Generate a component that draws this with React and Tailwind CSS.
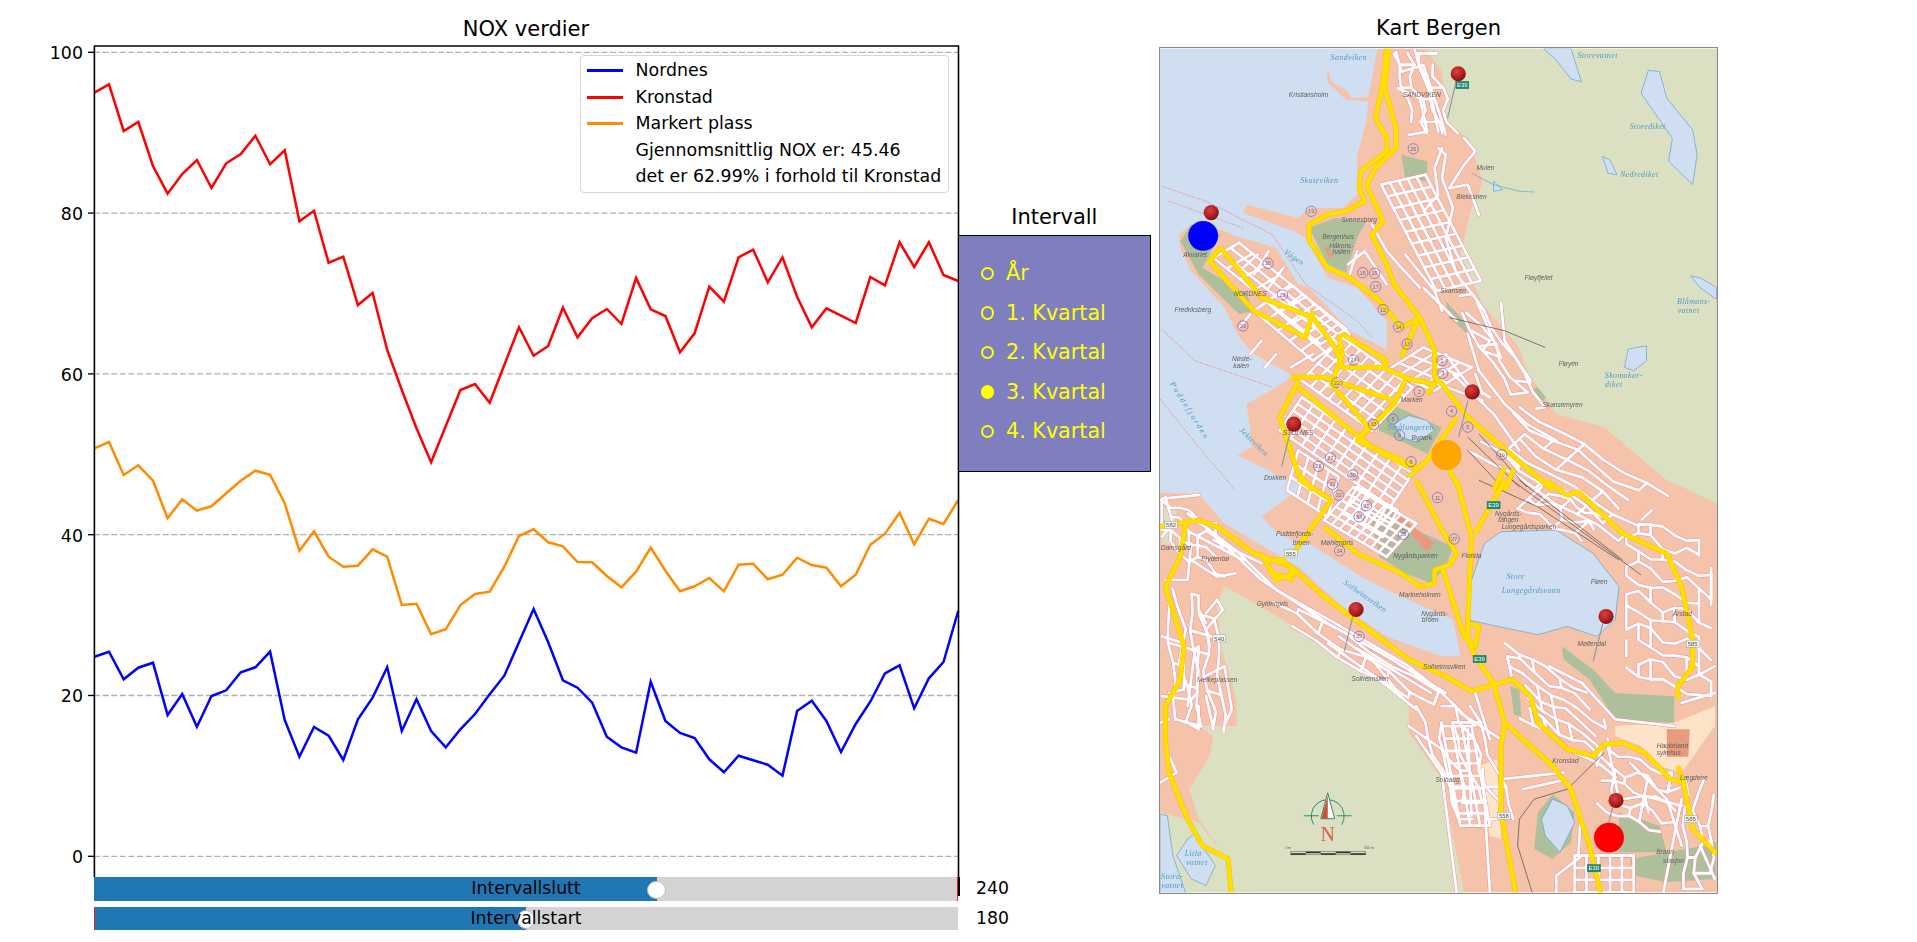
const RED = [278,253,393,366,498,581,522,480,564,490,462,407,493,451,664,632,788,770,915,879,1050,1170,1285,1387,1278,1170,1152,1208,1095,982,1067,1038,923,1012,955,927,972,834,928,948,1057,1000,860,905,772,749,847,772,890,982,925,947,969,831,856,727,801,727,825,843];
const BLUE = [590,575,658,623,608,765,702,800,708,691,637,622,575,780,890,801,827,900,778,713,622,813,718,813,862,808,762,703,647,547,447,547,661,683,728,830,862,878,665,783,819,834,898,937,887,901,914,947,753,722,783,876,792,725,640,616,745,655,606,453];
const ORANGE = [-35,-54,45,16,62,175,118,152,139,100,62,32,44,130,272,214,290,320,317,268,290,435,431,523,508,435,402,395,320,228,208,247,259,306,307,348,382,335,263,332,394,379,354,394,314,311,358,344,293,315,323,379,344,254,221,158,253,176,192,120];

// the plot svg starts at page y 46
const linePts = (vals, toY) => vals.map((v, i) => `${(94.4 + 14.64 * i).toFixed(1)},${(toY(v) - 46).toFixed(1)}`).join(' ');
const TICKS = [100, 80, 60, 40, 20, 0];
const tickY = (t) => 856.3 - 8.04 * t - 46;

const RADIOS = [
  { label: 'År' },
  { label: '1. Kvartal' },
  { label: '2. Kvartal' },
  { label: '3. Kvartal', active: true },
  { label: '4. Kvartal' },
];

// map coordinates: traced from two crops with different scales
const X = (x) => (x - 25) / 2.703;
const Y3 = (y) => y / 3 - 26.67;
const Y4 = (y) => 433.33 + y / 3;
const conv = (s, Y) => s.split(' ').map((p) => { const [x, y] = p.split(',').map(Number); return `${X(x).toFixed(1)},${Y(y).toFixed(1)}`; }).join(' ');
const p3 = (s) => conv(s, Y3);
const p4 = (s) => conv(s, Y4);

const grid = (ox, oy, ux, uy, vx, vy, nu, nv) => {
  const out = [];
  for (let i = 0; i <= nu; i++) { const a = ox + ux * i / nu, b = oy + uy * i / nu; out.push(`${a},${b} ${a + vx},${b + vy}`); }
  for (let j = 0; j <= nv; j++) { const a = ox + vx * j / nv, b = oy + vy * j / nv; out.push(`${a},${b} ${a + ux},${b + uy}`); }
  return out;
};

// hillside streets: wobbly lines along u, stacked along v, with a few links between them
const contours = (seed, ox, oy, ux, uy, vx, vy, n, links = 3) => {
  let s = seed;
  const rnd = () => { s = (s * 16807) % 2147483647; return s / 2147483647; };
  const steps = 7, wob = 0.22 / Math.max(n, 1);
  const at = (i, k, ph) => {
    const t = k / steps, w = Math.sin(k * 1.7 + ph) * wob * (1 + i % 2);
    return [ox + ux * t + vx * (i / n + w), oy + uy * t + vy * (i / n + w)];
  };
  const out = [];
  const phases = [];
  for (let i = 0; i <= n; i++) {
    const ph = rnd() * 6; phases.push(ph);
    const from = rnd() < 0.4 ? 1 : 0, to = rnd() < 0.4 ? steps - 1 : steps;
    const pts = [];
    for (let k = from; k <= to; k++) { const [x, y] = at(i, k, ph); pts.push(`${x.toFixed(0)},${y.toFixed(0)}`); }
    out.push(pts.join(' '));
  }
  for (let i = 0; i < n; i++) {
    for (let l = 0; l < links; l++) {
      const k = Math.floor(rnd() * (steps + 1));
      const [a, b] = at(i, k, phases[i]), [c, d] = at(i + 1, k, phases[i + 1]);
      out.push(`${a.toFixed(0)},${b.toFixed(0)} ${c.toFixed(0)},${d.toFixed(0)}`);
    }
  }
  return out;
};

const WATER3 = [
  '25,80 615,80 600,170 590,225 545,230 530,205 490,180 480,135 478,180 530,235 590,240 585,300 560,400 560,520 520,560 430,560 400,590 260,550 250,575 390,630 420,650 480,770 560,800 640,900 640,985 540,930 430,800 400,790 340,680 220,640 190,625 110,610 75,640 80,680 110,750 200,860 240,950 280,1000 385,1065 340,1100 260,1150 275,1280 235,1305 320,1350 420,1418 25,1418',
  '1065,80 1140,80 1168,180 1140,172 1100,115',
  '1350,145 1380,150 1400,230 1470,325 1482,400 1470,490 1405,420 1415,350 1330,215',
  '1225,405 1245,415 1265,460 1240,455',
  '1465,765 1490,770 1535,800 1535,835 1490,800',
  '1295,985 1345,975 1345,1020 1310,1050 1285,1040',
  '930,480 955,505 930,510',
  '660,1210 700,1185 750,1200 770,1230 720,1265 680,1250',
];
const WATER4 = [
  '25,-5 420,-5 385,40 300,110 340,155 400,190 430,190 570,290 660,340 820,420 840,530 790,530 640,470 520,380 400,260 330,215 200,130 130,40 25,38',
  '905,190 950,155 1100,150 1200,220 1270,320 1260,420 1210,470 1130,440 1050,465 900,430 860,420 870,300',
  '1090,960 1130,980 1150,1030 1110,1120 1070,1070 1060,1020',
  '100,1080 125,1060 145,1110 175,1160 150,1220 110,1200 70,1130',
  '25,1005 45,1010 60,1130 95,1243 25,1243',
];
const HILL3 = ['745,80 1535,80 1535,1445 1400,1380 1230,1220 1100,1180 1020,1050 1000,980 900,850 840,700 870,560 900,490 890,440 860,350 800,300 790,150'];
const HILL4 = [
  '200,320 300,380 400,450 550,560 700,660 700,760 790,900 850,1243 220,1243 200,1130 130,1020 105,930 160,830 170,770 130,740 235,740 230,650 190,500 180,380',
  '25,1000 130,1030 200,1130 220,1243 25,1243',
  '25,80 70,85 60,190 30,195',
  '1420,0 1535,0 1535,70 1480,40',
];
const PARK3 = [
  '430,620 500,590 585,600 560,650 530,755 480,730',
  '680,400 750,420 750,480 690,470',
  '110,610 190,640 140,740 260,820 280,870 240,880 130,760 80,660',
  '610,1190 650,1150 790,1220 750,1300 620,1230',
  '800,840 850,900 860,940 810,890',
  '1030,1110 1050,1100 1072,1130 1060,1148',
];
const PARK4 = [
  '590,90 640,80 720,150 820,200 800,260 760,310 690,280 620,230',
  '1115,500 1200,570 1260,640 1420,650 1420,730 1260,720 1190,600 1120,540',
  '1270,1000 1380,1040 1400,1120 1270,1120',
  '975,620 1000,630 1005,710 985,705',
  '1090,945 1150,1000 1140,1090 1090,1140 1040,1110 1050,1000',
  '1300,1140 1500,1100 1534,1090 1534,1200 1400,1210 1310,1190',
];
const PEACH4 = [
  '1260,740 1420,730 1530,680 1530,740 1440,880 1380,860 1330,800 1260,770',
  '890,860 940,840 950,1080 920,1070',
];

const ROADS3 = [
  '665,90 680,150 740,130 790,300 800,340', '715,80 730,140 760,220 780,330', '670,200 730,230 750,330 700,340',
  '780,380 800,400 790,470 820,560 800,650 830,760 880,830 950,1010', '850,350 880,390 850,430 810,500 860,490 890,580',
  '950,845 960,960 1030,1080', '790,380 770,440 780,520 740,570', '870,930 920,960 900,990 950,1010', '990,1080 1030,1085 1020,1060',
  '860,940 890,1050 960,1150 1020,1210 1100,1260', '800,1000 860,1090 920,1130', '820,1060 930,1180 1000,1290',
  '290,700 250,740', '320,690 280,760', '360,740 320,800', '240,920 270,880', '300,960 270,1000', '340,1000 310,1040', '380,1040 440,1000',
  '535,730 580,690 610,740 640,790', '560,690 540,760', '600,610 640,690 680,740 730,800', '690,700 770,810 790,870', '740,800 830,900',
  '780,1090 900,1140', '880,1060 900,1120', '960,1290 1000,1340',
];
const ROADS4 = [
  '30,55 130,45', '100,100 230,210 340,330 500,430 700,560 790,640 880,740', '140,130 300,300 480,430 640,530 800,640',
  '130,170 250,240', '170,180 300,250', '40,50 60,130 30,170', '110,190 100,300 40,300', '110,240 180,290 230,280',
  '150,400 180,360 195,390 150,450 160,500', '150,430 130,390', '100,680 120,510 130,500 125,640 110,660', '130,600 200,560 220,690 195,750',
  '150,650 170,750', '100,730 130,750 130,680', '30,470 90,490 90,630 50,640', '30,650 100,660', '25,730 50,720', '50,830 70,880 25,910',
  '480,490 620,600 720,690', '510,470 600,540 680,650', '550,500 760,640', '700,740 790,810 830,1000', '720,770 800,900',
  '860,750 870,1010', '790,890 830,1243', '880,640 920,780', '840,700 950,780', '900,870 920,1243', '950,900 1120,880',
  '1080,560 1170,610 1260,720 1420,740', '1240,800 1270,960', '1210,860 1225,800', '1300,850 1400,960 1440,1100', '1340,950 1440,980', '1280,960 1340,950 1350,1000',
  '1150,1130 1300,1130', '1100,1243 1100,1190 1170,1130', '1160,1130 1165,1030', '1440,960 1420,1070 1390,1243', '1490,1100 1530,1200',
  '1440,670 1530,640', '1480,590 1530,560', '1010,930 1110,905',
];
const GRIDS3 = [
  ...grid(625, 490, 120, -30, 150, 320, 5, 9), ...grid(170, 710, 70, -45, 290, 260, 3, 8), ...grid(280, 870, 100, -80, 160, 150, 3, 5),
  ...grid(410, 1130, 300, 230, -60, 100, 10, 5), ...grid(520, 950, 190, 150, -110, 130, 8, 5), ...grid(640, 1050, 130, 60, 100, -70, 4, 3),
  ...grid(400, 1290, 110, 80, -30, 120, 4, 3),
];
const GRIDS4 = [
  ...grid(470, 120, 170, 110, 80, -100, 8, 5), ...grid(1150, 1130, 160, 0, 0, 110, 5, 3), ...grid(790, 740, 80, 0, 50, 300, 3, 8),
  ...grid(560, 20, 110, 70, -40, 80, 4, 2),
];
const CONTOURS3 = [
  ...contours(11, 660, 95, 60, 240, 100, 0, 3, 2),
  ...contours(23, 810, 830, 200, 340, 60, -10, 2, 2),
  ...contours(37, 1000, 1160, 400, 270, -130, 130, 6, 3),
];
const CONTOURS4 = [
  ...contours(53, 30, 60, 170, 90, 0, 130, 3, 3),
  ...contours(67, 40, 320, 30, 400, 130, 40, 4, 3),
  ...contours(71, 340, 340, 440, 300, -20, 60, 2, 4),
  ...contours(83, 720, 680, 120, 340, 150, 0, 4, 3),
  ...contours(97, 960, 490, 260, 180, 40, 220, 6, 3),
  ...contours(101, 1290, 110, 230, 90, 0, 460, 10, 3),
  ...contours(113, 1240, 810, 200, 90, -30, 170, 4, 3),
  ...contours(127, 1450, 900, 0, 330, 70, 0, 2, 3),
  ...contours(131, 1060, 20, 170, 100, -60, 60, 2, 3),
];

const YELLOW3 = [
  '640,80 630,180 610,290 640,350 640,390 570,450 565,500 580,540 530,570 480,580 430,610 430,660 480,740 540,770 620,840 680,920 725,895 680,1010',
  '645,80 635,200 665,320 665,380 610,440 585,490 630,600 600,640 640,730 660,790 730,890 770,990 770,1070 790,1090 860,1190 1090,1410',
  '190,680 160,720 190,760 280,870 420,950 440,870', '190,680 300,830 440,890 500,980 520,1040 640,1040', '520,940 640,1020 630,1040 700,1075 770,1090 750,1120',
  '510,940 520,1000 490,1090 590,1220 560,1260 700,1340', '400,1080 350,1190 400,1360 440,1410', '400,1100 520,1210 600,1280 720,1340',
  '380,1070 470,1070 660,1140', '690,1080 660,1150 570,1250', '700,1370 750,1320 830,1190', '810,1350 840,1410', '960,1340 930,1410', '985,1345 960,1410',
];
const YELLOW4 = [
  '400,-5 490,60 390,215', '470,140 560,220 680,280 730,320 770,310 770,270 810,255 830,220 790,150 720,0',
  '830,0 870,170 860,430 860,480 880,530 930,610 960,730 950,800 950,1000 990,1243', '960,0 880,160', '790,260 850,470 880,500 890,440 860,430',
  '25,140 130,120 180,140 280,220 380,260 470,350 700,540 800,590 870,635 980,600 1030,650 1050,730 1130,810 1200,830 1230,795 1280,790 1340,820 1410,900 1445,910 1470,1050 1535,1125',
  '95,130 80,230 40,320 90,500 80,600 40,680 40,790 50,880 100,1020 140,1100 210,1140 218,1243', '960,730 1090,860 1140,930 1190,1100 1220,1243',
  '310,240 340,300 390,280 360,240 310,240', '300,220 330,280 390,300', '1070,0 1130,45 1160,35 1280,160 1400,220 1440,320 1470,480 1470,560 1430,620 1430,660',
  '1430,860 1445,910',
];
const RAIL = [
  p3('860,1250 1000,1400'), p3('890,1240 1020,1400'), p3('860,1290 960,1410'), p3('810,890 960,930 1070,980'),
  p4('890,0 1050,80 1270,240'), p4('980,0 1140,130 1330,285'), p4('1000,0 1280,240'), p4('1230,820 1130,930 1040,960 1000,1020 995,1100 1035,1243'),
];
const DASHED = [p3('30,495 150,540 330,640 420,790 560,900 600,950'), p3('30,925 120,1020 330,1100'), p3('25,1135 130,1280 230,1410'), p3('50,540 250,620')];

const CIRCLES3 = [[712,382,'26'],[435,570,'19'],[318,727,'20'],[357,822,'23'],[250,915,'29'],[575,755,'16'],[607,757,'15'],[610,797,'17'],[630,866,'12'],[672,918,'14'],[695,970,'13'],[790,1020,'1'],[792,1058,'3'],[550,1018,'24'],[505,1086,'22'],[728,1113,'2'],[816,1172,'4'],[860,1220,'5'],[657,1196,'6'],[675,1245,'9'],[604,1212,'18'],[706,1324,'8'],[952,1303,'10'],[487,1312,'27'],[455,1338,'28'],[548,1364,'30'],[493,1392,'31']];
const CIRCLES4 = [[510,45,'32'],[585,76,'25'],[565,110,'33'],[778,52,'11'],[685,163,'28'],[823,177,'27'],[512,212,'34'],[565,470,'35']];
const SHIELDS = [
  [X(845), Y3(190), 'E39', true], [X(930), Y4(75), 'E39', true], [X(892), Y4(538), 'E39', true], [X(1202), Y4(1168), 'E39', true],
  [X(380), Y4(220), '555'], [X(186), Y4(476), '540'], [X(1470), Y4(492), '585'], [X(1465), Y4(1020), '585'], [X(958), Y4(1010), '558'], [X(55), Y4(135), '582'],
];
const BLUE_LABELS = [
  [X(537), Y3(115), 'Sandviken'], [X(1212), Y3(110), 'Storevatnet'], [X(1348), Y3(322), 'Storediket'], [X(1325), Y3(468), 'Nedrediket'], [X(457), Y3(486), 'Skuteviken'],
  [X(1473), Y3(850), 'Blåmans-'], [X(1459), Y3(877), 'vatnet'], [X(1283), Y3(1072), 'Skomakar-'], [X(1256), Y3(1098), 'diket'], [X(705), Y3(1228), 'Smålungeren'],
  [X(990), Y4(298), 'Store'], [X(1032), Y4(338), 'Lungegårdsvann'], [X(115), Y4(1130), 'Litla'], [X(125), Y4(1157), 'vatnet'], [X(58), Y4(1200), 'Stora-'], [X(58), Y4(1227), 'vatnet'],
];
const ROTATED_BLUE = [[X(385), Y3(715), 'Vågen', 35], [X(100), Y3(1175), 'Puddefjorden', 58, 2], [X(275), Y3(1270), 'Jekteviken', 45], [X(578), Y4(355), 'Solheimsviken', 35]];
const GREY_LABELS = [
  [X(428), Y3(226), 'Kristiansholm'], [X(735), Y3(225), 'SANDVIKEN'], [X(908), Y3(445), 'Mulen'], [X(870), Y3(532), 'Blekksrien'], [X(565), Y3(603), 'Sverresborg'],
  [X(508), Y3(655), 'Bergenhus'], [X(517), Y3(680), 'Håkons-'], [X(517), Y3(698), 'hallen'], [X(120), Y3(707), 'Akvariet'], [X(270), Y3(826), 'NORDNES'],
  [X(114), Y3(873), 'Fredriksberg'], [X(1052), Y3(778), 'Fløyfjellet'], [X(820), Y3(817), 'Skansen'], [X(1133), Y3(1036), 'Fløyen'], [X(1117), Y3(1160), 'Skansemyren'],
  [X(247), Y3(1022), 'Nøste-'], [X(245), Y3(1042), 'kaien'], [X(708), Y3(1145), 'Marken'], [X(400), Y3(1244), 'STOLNES'], [X(337), Y3(1378), 'Dokken'], [X(735), Y3(1258), 'Bypark'],
  [X(970), Y4(108), 'Nygårds-'], [X(970), Y4(127), 'tangen'], [X(1026), Y4(146), 'Lungegårdsparken'], [X(870), Y4(234), 'Florida'], [X(1216), Y4(311), 'Fløen'],
  [X(718), Y4(234), 'Nygårdsparken'], [X(730), Y4(352), 'Marineholmen'], [X(770), Y4(408), 'Nygårds-'], [X(758), Y4(427), 'broen'], [X(1196), Y4(500), 'Møllendal'],
  [X(1442), Y4(410), 'Årstad'], [X(796), Y4(567), 'Solheimsviken'], [X(595), Y4(603), 'Solheimslien'], [X(180), Y4(608), 'Melkeplassen'], [X(175), Y4(243), 'Frydenbø'],
  [X(68), Y4(210), 'Damsgård'], [X(330), Y4(379), 'Gyldenpris'], [X(390), Y4(167), 'Puddefjords-'], [X(408), Y4(195), 'broen'], [X(505), Y4(195), 'Møhlenpris'], [X(1125), Y4(852), 'Kronstad'],
  [X(805), Y4(907), 'Solhaug'], [X(1415), Y4(806), 'Haukeland'], [X(1405), Y4(826), 'sykehus'], [X(1473), Y4(903), 'Lægdene'], [X(1395), Y4(1126), 'Brann'], [X(1418), Y4(1153), 'stasjon'],
];
const PINS = [
  { c: [X(834), Y3(156)], s: [X(826), Y3(190), X(805), Y3(290)] }, { c: [X(164), Y3(574)], s: null },
  { c: [X(872), Y3(1114)], s: [X(860), Y3(1140), X(835), Y3(1250)] }, { c: [X(388), Y3(1211)], s: [X(378), Y3(1235), X(355), Y3(1340)] },
  { c: [X(557), Y4(389)], s: [X(548), Y4(410), X(525), Y4(515)] }, { c: [X(1235), Y4(410)], s: [X(1226), Y4(432), X(1200), Y4(545)] },
  { c: [X(1262), Y4(964)], s: [X(1253), Y4(985), X(1240), Y4(1040)] },
];

const ROAD_PTS = [...ROADS3.map(p3), ...GRIDS3.map(p3), ...CONTOURS3.map(p3), ...ROADS4.map(p4), ...GRIDS4.map(p4), ...CONTOURS4.map(p4)];
const YELLOW_PTS = [...YELLOW3.map(p3), ...YELLOW4.map(p4)];

function BergenMap() {
  const cx = X(480), cy = Y4(1010);
  return (
    <svg width="559" height="847" viewBox="0 0 559 847" className="block border border-[#8a8a8a] box-border">
      <defs>
        <filter id="soft" x="0" y="0" width="100%" height="100%"><feGaussianBlur stdDeviation="0.55" /></filter>
        <radialGradient id="pin" cx="40%" cy="35%" r="70%"><stop offset="0%" stopColor="#d8403f" /><stop offset="60%" stopColor="#b31f20" /><stop offset="100%" stopColor="#6f1012" /></radialGradient>
        <clipPath id="mapClip"><rect width="559" height="847" /></clipPath>
      </defs>
      <g clipPath="url(#mapClip)">
        <g filter="url(#soft)">
          <rect width="559" height="847" fill="#f5c3aa" />
          <polygon points={p3(WATER3[0])} fill="#cfdff1" />
          <polygon points={p4(WATER4[0])} fill="#cfdff1" />
          {HILL3.map((w, i) => <polygon key={i} points={p3(w)} fill="#dce0c3" />)}
          {HILL4.map((w, i) => <polygon key={i} points={p4(w)} fill="#dce0c3" />)}
          {PEACH4.map((w, i) => <polygon key={i} points={p4(w)} fill="#fde3c8" />)}
          {PARK3.map((w, i) => <polygon key={i} points={p3(w)} fill="#aebf9c" />)}
          {PARK4.map((w, i) => <polygon key={i} points={p4(w)} fill="#aebf9c" />)}
          {WATER3.slice(1).map((w, i) => <polygon key={i} points={p3(w)} fill="#cfdff1" stroke="#5ea3c8" strokeWidth="0.7" />)}
          {WATER4.slice(1).map((w, i) => <polygon key={i} points={p4(w)} fill="#cfdff1" stroke="#5ea3c8" strokeWidth="0.7" />)}
          <polygon points={p4('1400,750 1462,750 1458,832 1400,832')} fill="#e79a7c" />
          <polygon points={p3('470,680 480,675 495,705 485,712')} fill="#e89a80" />
          <polygon points={p4('660,110 680,110 770,190 750,215')} fill="#e89a80" />
          <polyline points={p3('870,455 930,490 1000,510 1040,512')} fill="none" stroke="#5ea3c8" strokeWidth="0.7" />
          {DASHED.map((d, i) => <polyline key={i} points={d} fill="none" stroke="#e07a8a" strokeWidth="0.7" strokeDasharray="2 1.2" />)}
          {ROAD_PTS.map((r, i) => <polyline key={i} points={r} fill="none" stroke="#ec8ba0" strokeWidth="3.7" strokeLinejoin="round" strokeLinecap="round" />)}
          {ROAD_PTS.map((r, i) => <polyline key={i} points={r} fill="none" stroke="#ffffff" strokeWidth="2.8" strokeLinejoin="round" strokeLinecap="round" />)}
          {RAIL.map((r, i) => <polyline key={i} points={r} fill="none" stroke="#5a5a5a" strokeWidth="0.8" />)}
          {YELLOW_PTS.map((r, i) => <polyline key={i} points={r} fill="none" stroke="#eec000" strokeWidth="5" strokeLinejoin="round" />)}
          {YELLOW_PTS.map((r, i) => <polyline key={i} points={r} fill="none" stroke="#ffde00" strokeWidth="4.2" strokeLinejoin="round" />)}
          {[...CIRCLES3.map(([x, y, t]) => [X(x), Y3(y), t]), ...CIRCLES4.map(([x, y, t]) => [X(x), Y4(y), t])].map(([x, y, t], i) => (
            <g key={i}>
              <circle cx={x} cy={y} r="5.2" fill="none" stroke="#8878b8" strokeWidth="0.9" />
              <text x={x} y={y + 2} fontSize="5.5" textAnchor="middle" fill="#6c5fa0" fontFamily="Liberation Sans">{t}</text>
            </g>
          ))}
          {SHIELDS.map(([x, y, t, green], i) => (
            <g key={i}>
              <rect x={x - 6.5} y={y - 3.6} width="13" height="7.2" fill={green ? '#1f8a70' : '#f4f4ee'} stroke={green ? '#0f6b55' : '#999'} strokeWidth="0.5" />
              <text x={x} y={y + 2.2} fontSize="6" textAnchor="middle" fill={green ? '#ffffff' : '#555'} fontFamily="Liberation Sans">{t}</text>
            </g>
          ))}
          {BLUE_LABELS.map(([x, y, t], i) => <text key={i} x={x} y={y} fontSize="8" textAnchor="middle" fill="#4f9cc4" fontStyle="italic" letterSpacing="0.4" fontFamily="Liberation Serif">{t}</text>)}
          {ROTATED_BLUE.map(([x, y, t, a, ls]) => <text key={t} x={x} y={y} fontSize="8" textAnchor="middle" fill="#4f9cc4" fontStyle="italic" letterSpacing={ls || 0.4} transform={`rotate(${a} ${x} ${y})`} fontFamily="Liberation Serif">{t}</text>)}
          {GREY_LABELS.map(([x, y, t], i) => <text key={i} x={x} y={y} fontSize="6.6" textAnchor="middle" fill="#5f5f5f" fontStyle="italic" fontFamily="Liberation Sans">{t}</text>)}
          {/* compass */}
          <g stroke="#2c8a78" strokeWidth="1" fill="none">
            <path d={`M ${cx - 14} ${cy + 9} A 16.5 16.5 0 1 1 ${cx + 14} ${cy + 9}`} />
            <path d={`M ${cx - 24} ${cy} H ${cx - 9} M ${cx + 9} ${cy} H ${cx + 24}`} />
            <path d={`M ${cx} ${cy - 23} L ${cx - 7} ${cy + 3} H ${cx + 7} Z`} fill="#ffffff" />
          </g>
          <path d={`M ${cx} ${cy - 20} L ${cx - 6.5} ${cy + 3} H ${cx} Z`} fill="#c9503c" />
          <text x={cx} y={Y4(1085)} fontSize="20" textAnchor="middle" fill="#d9604a" fontFamily="Liberation Serif">N</text>
          <text x={X(373)} y={Y4(1111)} fontSize="3.5" textAnchor="middle" fill="#555" fontFamily="Liberation Sans">0 m</text>
          <text x={X(592)} y={Y4(1111)} fontSize="3.5" textAnchor="middle" fill="#555" fontFamily="Liberation Sans">500 m</text>
          {[0, 1, 2, 3, 4].map((i) => <rect key={i} x={X(380) + i * 15} y={Y4(1118) + (i % 2 ? 0 : 1.6)} width="15" height="1.6" fill="#333" />)}
          <rect x={X(380)} y={Y4(1118)} width="75" height="3.2" fill="none" stroke="#333" strokeWidth="0.4" />
          {PINS.map(({ s }, i) => s && <line key={i} x1={s[0]} y1={s[1]} x2={s[2]} y2={s[3]} stroke="#8f9aa5" strokeWidth="1.2" />)}
          {PINS.map(({ c }, i) => <circle key={i} cx={c[0]} cy={c[1]} r="7.6" fill="url(#pin)" />)}
        </g>
        <circle cx={X(142)} cy={Y3(644)} r="15" fill="#0000ff" />
        <circle cx={X(802)} cy={Y3(1304)} r="15.2" fill="#ffa500" />
        <circle cx={X(1243)} cy={Y4(1076)} r="15" fill="#ff0000" />
      </g>
    </svg>
  );
}

function Slider({ label, value, pct, valueLineLeft, spine, className }) {
  return (
    <div className={`flex ${className}`}>
      <div className="relative ml-[94px] w-[864px] h-full bg-[#d3d3d3]">
        <div className="h-full bg-[#1f77b4]" style={{ width: pct }} />
        <div className={`absolute top-0 h-full w-[1.2px] bg-[#e8202a] ${valueLineLeft ? 'left-0' : 'right-0'}`} />
        <div className="absolute top-1/2 w-[18.6px] h-[18.6px] -mt-[8.5px] -ml-[9.3px] rounded-full bg-white border border-[#bdbdbd]" style={{ left: pct }} />
        <div className="absolute inset-0 flex items-center justify-center text-[17.3px] leading-none text-black">{label}</div>
        {spine && <div className="absolute left-full top-0 h-[19px] w-[1.6px] bg-black" />}
      </div>
      <div className="ml-[18px] flex items-center text-[17.3px] leading-none text-black">{value}</div>
    </div>
  );
}

export default function App() {
  return (
    <div className="flex w-[1917px] h-[942px] overflow-hidden bg-white font-['DejaVu_Sans'] text-black">
      <div className="w-[1150.7px] flex flex-col shrink-0">
        <div className="flex h-[877px]">
          {/* NOX chart */}
          <div className="w-[958px] shrink-0">
            <div className="h-[46px] pl-[94px] flex items-center justify-center text-[21px] leading-none pt-[12px]">NOX verdier</div>
            <div className="relative h-[831px]">
              <svg width="960" height="831" className="block overflow-visible">
                {TICKS.map((t) => (
                  <g key={t}>
                    <line x1="94" x2="958" y1={tickY(t)} y2={tickY(t)} stroke="#b0b0b0" strokeWidth="1.33" strokeDasharray="6 2.6" />
                    <line x1="88" x2="94" y1={tickY(t)} y2={tickY(t)} stroke="#000" strokeWidth="1.33" />
                    <text x="83" y={tickY(t)} dy="6.8" textAnchor="end" fontSize="17.4" fontFamily="DejaVu Sans" fill="#000">{t}</text>
                  </g>
                ))}
                <polyline points={linePts(RED, (v) => v / 3)} fill="none" stroke="#ff0000" strokeWidth="2.5" />
                <polyline points={linePts(ORANGE, (v) => 460 + v / 3)} fill="none" stroke="#ff8c00" strokeWidth="2.5" />
                <polyline points={linePts(BLUE, (v) => 460 + v / 3)} fill="none" stroke="#0000ff" strokeWidth="2.5" />
                <path d="M 94.4 831 V 0 H 958.5 V 831" fill="none" stroke="#000" strokeWidth="1.6" />
              </svg>
              {/* legend */}
              <div className="absolute left-[580px] top-[9px] w-[369px] h-[138px] rounded-[4px] border-[1.67px] border-[#d6d6d6] bg-white/80 text-[17.4px] leading-none flex flex-col pt-[1.5px]">
                <div className="h-[26.6px] flex items-center whitespace-nowrap"><span className="ml-[5.5px] w-[36px] h-[3px] bg-[#0000ff]" /><span className="ml-[13px]">Nordnes</span></div>
                <div className="h-[26.6px] flex items-center whitespace-nowrap"><span className="ml-[5.5px] w-[36px] h-[3px] bg-[#ff0000]" /><span className="ml-[13px]">Kronstad</span></div>
                <div className="h-[26.6px] flex items-center whitespace-nowrap"><span className="ml-[5.5px] w-[36px] h-[3px] bg-[#ff8c00]" /><span className="ml-[13px]">Markert plass</span></div>
                <div className="h-[26.6px] flex items-center whitespace-nowrap pl-[54.5px]">Gjennomsnittlig NOX er: 45.46</div>
                <div className="h-[26.6px] flex items-center whitespace-nowrap pl-[54.5px]">det er 62.99% i forhold til Kronstad</div>
              </div>
            </div>
          </div>

          {/* Intervall radio panel */}
          <div className="w-[192.7px] shrink-0">
            <div className="h-[235px] flex items-end justify-center text-[21px] leading-none pb-[7px]">Intervall</div>
            <div className="h-[237px] box-border border-[1.67px] border-black bg-[#7f7fbf] pt-[18px] pl-[21.5px] relative z-10">
              {RADIOS.map((r) => (
                <div key={r.label} className="h-[39.4px] flex items-center gap-[12px]">
                  <span className={`w-[13.5px] h-[13.5px] rounded-full border-2 border-[#ffff00] ${r.active ? 'bg-[#ffff00]' : ''}`} />
                  <span className="text-[20.7px] leading-none text-[#ffff00]">{r.label}</span>
                </div>
              ))}
            </div>
          </div>
        </div>
        <Slider label="Intervallslutt" value="240" pct="562.5px" spine className="h-[24px]" />
        <Slider label="Intervallstart" value="180" pct="432px" valueLineLeft className="h-[23px] mt-[6px]" />
      </div>

      {/* map column */}
      <div className="ml-[8.3px] w-[559px] shrink-0">
        <div className="h-[46.7px] flex items-center justify-center text-[21px] leading-none pt-[11px]">Kart Bergen</div>
        <BergenMap />
      </div>
    </div>
  );
}
